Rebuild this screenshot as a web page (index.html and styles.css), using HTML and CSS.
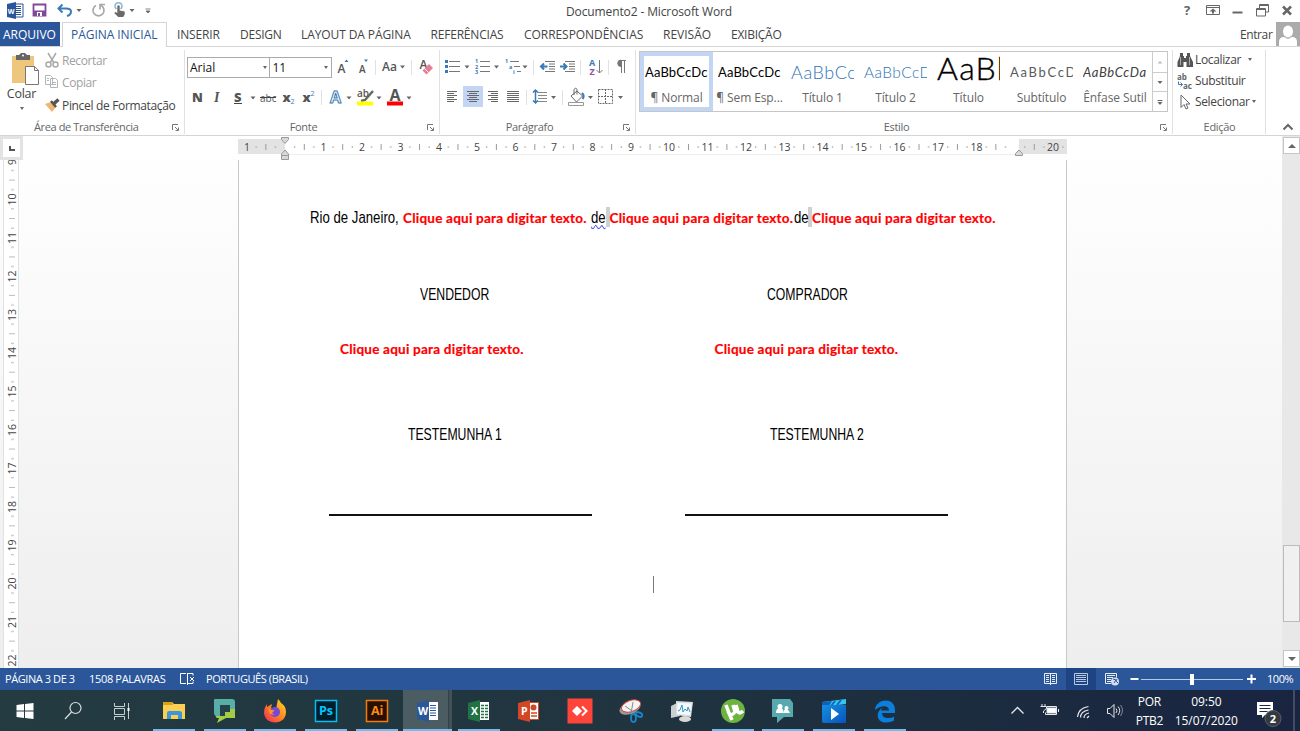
FILE: index.html
```html
<!DOCTYPE html>
<html lang="pt-BR">
<head>
<meta charset="utf-8">
<title>Documento2 - Microsoft Word</title>
<link rel="stylesheet" href="styles.css">
</head>
<body>
<header class="titlebar">
  <div class="quick">
    <svg width="150" height="22" viewBox="0 0 150 22">
      <path d="M15 4h8v13h-8z" fill="#fff" stroke="#2b579a"/><path d="M16 6.500h5M16 8.500h5M16 10.500h5M16 12.500h5M16 14.500h5" stroke="#2b579a"/><path d="M7 4l9-2v17l-9-2z" fill="#2b579a"/><text x="7.700" y="13.500" class="ico-w">W</text>
      <path d="M33.500 4.500h12v11h-12z" fill="#fff" stroke="#80479b" stroke-width="1.800"/><path d="M34 10.500h11v5h-11z" fill="#80479b"/><path d="M37 12h5v4h-5z" fill="#fff"/><path d="M38 13h2v3h-2z" fill="#80479b"/>
      <path d="M59 8.500h7c7 0 6 6 1 7.500M62.500 4.500l-4 4 4 4" fill="none" stroke="#3a7ab8" stroke-width="2"/><path d="M76.500 9h5l-2.500 3zM129.500 9h5l-2.500 3z" fill="#666"/>
      <path d="M96 5.500a5.500 5.500 0 1 0 5 0M100 9.500v-5h5" fill="none" stroke="#a6a6a6" stroke-width="1.600"/>
      <path d="M116.500 9a3.500 3.500 0 1 1 4 0" fill="none" stroke="#8db3d6" stroke-width="1.500"/><path d="M117.300 5.500h2.400v5l5 1v3l-1.500 2.500h-5l-4-4 1.500-1 1.600 1z" fill="#6a6a6a"/>
      <path d="M145.500 9h5M146 11h4l-2 2z" fill="#666" stroke="#666" stroke-width=".8"/>
    </svg>
  </div>
  <div class="window-title">Documento2 - Microsoft Word</div>
  <svg class="window-tools" width="118" height="22" viewBox="0 0 118 22" fill="none" stroke="#666">
    <text x="3" y="15" class="help">?</text>
    <path d="M25.500 5.500h13v9h-13zM25 7.500h14" /><path d="M32 8.500l3.500 3h-2.500v2h-2v-2h-2.500z" fill="#666" stroke="none"/>
    <path d="M51.500 12.500h10" stroke-width="2"/><path d="M75.500 8.500h9v7.500h-9zM75.500 9.500h9M78.500 8v-3.500h9v7.500h-3M78.500 5.500h9"/>
    <path d="M102 6.500l8 8M110 6.500l-8 8" stroke-width="2.500"/>
  </svg>
</header>

<nav class="tabs">
  <span class="tab file">ARQUIVO</span>
  <span class="tab active">PÁGINA INICIAL</span>
  <span class="tab inserir">INSERIR</span>
  <span class="tab design">DESIGN</span>
  <span class="tab layout">LAYOUT DA PÁGINA</span>
  <span class="tab refs">REFERÊNCIAS</span>
  <span class="tab mail">CORRESPONDÊNCIAS</span>
  <span class="tab review">REVISÃO</span>
  <span class="tab view">EXIBIÇÃO</span>
  <span class="sign-in">Entrar</span>
  <svg width="24" height="24" viewBox="0 0 24 24"><path d="M0 0h24v24H0z" fill="#ababab"/><ellipse cx="12" cy="9.500" rx="5" ry="6" fill="#fff"/><path d="M3 24v-4q0-5 5-5l4 2 4-2q5 0 5 5v4z" fill="#fff"/></svg>
</nav>

<section class="ribbon">
  <div class="group clipboard">
    <div class="controls">
      <div class="paste">
        <svg width="30" height="34" viewBox="0 0 30 34"><path d="M2 4h22v27H2z" fill="#eec67c"/><path d="M6 3h3l2-2h4l2 2h3v5H6z" fill="#666"/><circle cx="13" cy="3.500" r="1" fill="#fff"/><path d="M15.500 14.500h9l4 4v14h-13z" fill="#fff" stroke="#777"/><path d="M24.500 14.500v4h4" fill="none" stroke="#777"/></svg>
        <span>Colar</span><i class="caret"></i>
      </div>
      <div class="clip-list">
        <div class="off"><svg width="16" height="16" viewBox="0 0 16 16" fill="none" stroke="#aaa" stroke-width="1.500"><path d="M3 1l6 10M11 1L5 11"/><circle cx="3.500" cy="12.500" r="2.500"/><circle cx="10.500" cy="12.500" r="2.500"/></svg><span>Recortar</span></div>
        <div class="off"><svg width="16" height="16" viewBox="0 0 16 16" fill="#fff" stroke="#b5b5b5"><path d="M.500 1.500h5l2 2v7h-7zM5.500 4.500h5l2 2v7h-7zM7 8.500h4M7 10.500h4M2 4.500h2M2 6.500h2"/></svg><span>Copiar</span></div>
        <div><svg width="16" height="16" viewBox="0 0 16 16"><path d="M0 7l6-2 5 5-4 5z" fill="#efb872"/><path d="M6 4l5 6" stroke="#555" stroke-width="2.500"/><path d="M9 6.500l4.500-4" stroke="#555" stroke-width="3.500"/></svg><span class="painter">Pincel de Formatação</span></div>
      </div>
    </div>
    <div class="caption"><span>Área de Transferência</span><svg class="launch" width="9" height="9" viewBox="0 0 9 9"><path d="M1.500 7V1.500H7M4 4l3 3M7.500 4.500v3h-3" fill="none" stroke="#777"/></svg></div>
  </div>

  <div class="group font">
    <div class="controls rows">
      <div class="tool-row combos">
        <div class="combo family"><span>Arial</span><i class="caret"></i></div><div class="combo size"><span>11</span><i class="caret"></i></div>
        <svg width="104" height="22" viewBox="332 0 104 22">
          <text x="338.500" y="17" class="glyph g12">A</text><path d="M345.500 6h4l-2-2.500zM365 3.500h4l-2 2.500z" fill="#3a7ab8"/><text x="360" y="17" class="glyph g10">A</text>
          <path d="M376.500 4v15M412.500 4v15" stroke="#e1e1e1"/><text x="383" y="15" class="glyph g12">Aa</text><path d="M401 9.500h5l-2.500 3z" fill="#666"/>
          <text x="420.500" y="13" class="glyph g12">A</text><path d="M423.500 14.500l6.500-6.500 4 4-6.500 6.500z" fill="#e57f91"/><path d="M425.500 12.500l4 4" stroke="#fff"/>
        </svg>
      </div>
      <div class="tool-row">
        <svg width="230" height="22" viewBox="187 0 230 22">
          <text x="192" y="15.500" class="glyph bold">N</text><text x="214" y="15.500" class="glyph ital">I</text><text x="234" y="15.500" class="glyph bold">S</text><path d="M234 17.500h8" stroke="#444"/>
          <path d="M250.500 10.500h5l-2.500 3zM346.500 10.500h5l-2.500 3zM376.500 10.500h5l-2.500 3zM406.500 10.500h5l-2.500 3z" fill="#666"/>
          <text x="260" y="15.500" class="glyph abc">abc</text><path d="M260 11.500h16" stroke="#444"/>
          <text x="282.500" y="15.500" class="glyph bold">x</text><text x="290.500" y="18" class="num">2</text><text x="302.500" y="15.500" class="glyph bold">x</text><text x="310.500" y="10" class="num">2</text><path d="M321.500 4v15" stroke="#e1e1e1"/>
          <text x="330" y="16.500" class="outline-a">A</text>
          <text x="357" y="11" class="glyph abc2">ab</text><path d="M373 5l-8 9-4 1" stroke="#666" stroke-width="2.500" fill="none"/><path d="M357 15.500h16v4h-16z" fill="#ff0"/>
          <text x="389.500" y="14.500" class="glyph big-a">A</text><path d="M387 15.500h16v4h-16z" fill="red"/>
        </svg>
      </div>
    </div>
    <div class="caption"><span>Fonte</span><svg class="launch" width="9" height="9" viewBox="0 0 9 9"><path d="M1.500 7V1.500H7M4 4l3 3M7.500 4.500v3h-3" fill="none" stroke="#777"/></svg></div>
  </div>

  <div class="group paragraph">
    <div class="controls rows">
      <div class="tool-row">
        <svg width="190" height="22" viewBox="442 0 190 22" fill="none" stroke="#777">
          <path d="M449 5.500h11M449 10.500h11M449 15.500h11M480 5.500h10M480 10.500h10M480 15.500h10M510 5.500h9M514 10.500h6M517 15.500h4"/>
          <path d="M445 4h3v3h-3zM445 9h3v3h-3zM445 14h3v3h-3z" fill="#3a7ab8" stroke="none"/>
          <text x="475" y="7" class="list-n">1</text><text x="475" y="12.500" class="list-n">2</text><text x="475" y="18" class="list-n">3</text><text x="505" y="7" class="list-n">1</text><text x="509" y="12.500" class="list-n">a</text><text x="513" y="18" class="list-n">i</text>
          <path d="M464.500 9.500h5l-2.500 3zM494 9.500h5l-2.500 3zM522.500 9.500h5l-2.500 3z" fill="#666" stroke="none"/>
          <path d="M533.500 4v15M580.500 4v15M608.500 4v15" stroke="#e1e1e1"/>
          <path d="M545 5.500h10M549 8h6M549 10.500h6M549 13h6M545 15.500h10M565 5.500h10M569 8h6M569 10.500h6M569 13h6M565 15.500h10"/>
          <path d="M547.500 10.500h-6M544 7.500l-3 3 3 3M560 10.500h6M563.500 7.500l3 3-3 3" stroke="#3a7ab8" stroke-width="2"/>
          <text x="589" y="9.500" class="sort-a">A</text><text x="589.500" y="18.500" class="sort-z">Z</text><path d="M599.500 4v13M596.500 14l3 3 3-3"/>
          <path d="M621 4.500h5M621.500 4v13M624.500 4v13"/><path d="M621 4a3 3 0 0 0 0 6.500z" fill="#777"/>
        </svg>
      </div>
      <div class="tool-row">
        <svg width="190" height="22" viewBox="442 0 190 22" fill="none" stroke="#666">
          <path d="M463 0h20v21h-20z" fill="#c2d5f2" stroke="none"/>
          <path d="M447 5.500h10M447 7.500h7M447 9.500h10M447 11.500h7M447 13.500h10M447 15.500h7M467 5.500h12M469 7.500h8M467 9.500h12M469 11.500h8M467 13.500h12M469 15.500h8M488 5.500h10M491 7.500h7M488 9.500h10M491 11.500h7M488 13.500h10M491 15.500h7M507 5.500h12M507 7.500h12M507 9.500h12M507 11.500h12M507 13.500h12M507 15.500h12"/>
          <path d="M526.500 4v15M562.500 4v15" stroke="#e1e1e1"/><path d="M538 6.500h9M538 9.500h9M538 12.500h9M538 15.500h9" stroke="#888"/><path d="M535.500 4v13M533 6.500l2.500-2.500 2.500 2.500M533 14.500l2.500 2.500 2.500-2.500" stroke="#3a7ab8" stroke-width="1.500"/>
          <path d="M551 10h5l-2.500 3zM588 10h5l-2.500 3zM618 10h5l-2.500 3z" fill="#666" stroke="none"/>
          <path d="M571 10l6-5 5.500 5-6 6zM574 9V3.500q2-3 3 0v5"/><path d="M582 7q3 3 .5 6" stroke="#3a7ab8" stroke-width="2"/><path d="M568.500 16.500h15v3h-15z" fill="#fff" stroke="#999"/>
          <path d="M598.500 3.500h14v14h-14zM605.500 3v15M598 10.500h15" stroke-dasharray="2 1"/>
        </svg>
      </div>
    </div>
    <div class="caption"><span>Parágrafo</span><svg class="launch" width="9" height="9" viewBox="0 0 9 9"><path d="M1.500 7V1.500H7M4 4l3 3M7.500 4.500v3h-3" fill="none" stroke="#777"/></svg></div>
  </div>

  <div class="group styles">
    <div class="gallery">
      <div class="style selected"><b class="s-normal">AaBbCcDc</b><span>¶ Normal</span></div>
      <div class="style"><b class="s-normal">AaBbCcDc</b><span>¶ Sem Esp...</span></div>
      <div class="style"><b class="s-h1">AaBbCc</b><span>Título 1</span></div>
      <div class="style"><b class="s-h2">AaBbCcD</b><span>Título 2</span></div>
      <div class="style"><b class="s-title">AaBb</b><span>Título</span></div>
      <div class="style"><b class="s-sub">AaBbCcD</b><span>Subtítulo</span></div>
      <div class="style"><b class="s-emph">AaBbCcDa</b><span>Ênfase Sutil</span></div>
      <svg width="15" height="59" viewBox="0 0 15 59"><path d="M.5 0v59M0 20.500h15M0 39.500h15" stroke="#ccc"/><path d="M5.500 11.500h5L8 9z" fill="#bbb"/><path d="M5.500 29h5L8 32zM5.500 50h5L8 53z" fill="#666"/><path d="M5.500 48.500h5" stroke="#666"/></svg>
    </div>
    <div class="caption"><span>Estilo</span><svg class="launch" width="9" height="9" viewBox="0 0 9 9"><path d="M1.500 7V1.500H7M4 4l3 3M7.500 4.500v3h-3" fill="none" stroke="#777"/></svg></div>
  </div>

  <div class="group editing">
    <div class="edit-list">
      <div><svg width="16" height="16" viewBox="0 0 16 16"><path d="M3 1h3v3h1v2h2V4h1V1h3v3l3 6v5H9.500v-5h-3v5H.500v-5L3 4z" fill="#555"/><path d="M3.500 5v8M12.500 5v8" stroke="#aaa"/></svg><span class="loc">Localizar</span><i class="caret"></i></div>
      <div><svg width="16" height="16" viewBox="0 0 16 16"><text x="0" y="6.500" class="rep">ab</text><text x="6" y="15.500" class="rep">ac</text><path d="M1.500 8.500v3h4M3.500 9.500l2 2-2 2" fill="none" stroke="#3a7ab8"/></svg><span class="sub">Substituir</span></div>
      <div><svg width="16" height="16" viewBox="0 0 16 16"><path d="M4 1v12.500l3-3 2 4.500 2-1-2-4h4z" fill="#fff" stroke="#666"/></svg><span class="sel">Selecionar</span><i class="caret"></i></div>
    </div>
    <div class="caption"><span>Edição</span></div>
  </div>
  <svg class="collapse" width="34" height="88" viewBox="0 0 34 88"><path d="M17.500 82.500l4.500-4.500 4.500 4.500" fill="none" stroke="#666" stroke-width="2"/></svg>
</section>

<main class="workspace">
  <aside class="vruler">
    <div class="tab-stop"><span></span></div>
    <svg width="22" height="508" viewBox="0 160 22 508">
      <defs><pattern id="vt" width="22" height="38.420" patternUnits="userSpaceOnUse" y="199.300"><path d="M11 9.600h3M11 28.800h3" stroke="#b5b5b5"/><path d="M9 19.200h6" stroke="#bbb"/></pattern></defs>
      <path d="M3 160h16v508H3z" fill="#fff"/><path d="M3.500 160v508M18.500 160v508" stroke="#e1e1e1"/><path d="M4 160h14v508H4z" fill="url(#vt)"/>
      <g class="vnums">
        <text transform="translate(15.500 162)rotate(-90)">9</text><text transform="translate(15.500 199.500)rotate(-90)">10</text><text transform="translate(15.500 238)rotate(-90)">11</text><text transform="translate(15.500 276.500)rotate(-90)">12</text><text transform="translate(15.500 315)rotate(-90)">13</text><text transform="translate(15.500 353)rotate(-90)">14</text><text transform="translate(15.500 391.500)rotate(-90)">15</text><text transform="translate(15.500 430)rotate(-90)">16</text><text transform="translate(15.500 468.500)rotate(-90)">17</text><text transform="translate(15.500 507)rotate(-90)">18</text><text transform="translate(15.500 545.500)rotate(-90)">19</text><text transform="translate(15.500 583.500)rotate(-90)">20</text><text transform="translate(15.500 622)rotate(-90)">21</text><text transform="translate(15.500 660.500)rotate(-90)">22</text>
      </g>
    </svg>
  </aside>
  <div class="canvas">
    <svg class="hruler" width="829" height="24" viewBox="238 136 829 24">
      <defs><pattern id="ht" width="38.420" height="24" patternUnits="userSpaceOnUse" x="323.500" y="136"><path d="M9.600 10v2M28.800 10v2" stroke="#aaa"/><path d="M19.200 8v6" stroke="#999"/></pattern></defs>
      <path d="M237 139h830v15H237z" fill="#fff"/><path d="M237 139h48v15h-48zM1019 139h48v15h-48z" fill="#e3e3e3"/><path d="M285 154.500h734" stroke="#eee"/>
      <path d="M238 136h829v24H238z" fill="url(#ht)"/>
      <g class="hnums"><text x="247" y="151">1</text><text x="323.500" y="151">1</text><text x="362" y="151">2</text><text x="400.500" y="151">3</text><text x="439" y="151">4</text><text x="477" y="151">5</text><text x="515.500" y="151">6</text><text x="554" y="151">7</text><text x="592.500" y="151">8</text><text x="631" y="151">9</text><text x="669" y="151">10</text><text x="707.500" y="151">11</text><text x="746" y="151">12</text><text x="784.500" y="151">13</text><text x="822.500" y="151">14</text><text x="861" y="151">15</text><text x="899.500" y="151">16</text><text x="938" y="151">17</text><text x="976.500" y="151">18</text><text x="1053" y="151">20</text></g>
      <path d="M281.500 137.500h7v2l-3.500 4-3.500-4zM281.500 159.500v-5.500l3.500-4 3.500 4v5.500zM281.500 155.500h7M1015.500 155.500v-2l3.500-3.500 3.500 3.500v2z" fill="#d8d8d8" stroke="#999"/>
    </svg>
    <article class="page">
      <div class="line date-line">
        <span class="plain rio">Rio de Janeiro,</span><span class="field f1">Clique aqui para digitar texto.</span><span class="plain de spell">de</span><i class="mark"></i><span class="field f2">Clique aqui para digitar texto.</span><span class="plain de">de</span><i class="mark"></i><span class="field">Clique aqui para digitar texto.</span>
      </div>
      <div class="line parties"><span class="plain caps">VENDEDOR</span><span class="plain caps">COMPRADOR</span></div>
      <div class="line fields"><span class="field">Clique aqui para digitar texto.</span><span class="field">Clique aqui para digitar texto.</span></div>
      <div class="line witnesses"><span class="plain caps">TESTEMUNHA 1</span><span class="plain caps">TESTEMUNHA 2</span></div>
      <div class="signatures"><hr><hr></div>
      <div class="cursor"></div>
    </article>
  </div>
  <aside class="scrollbar">
    <div class="arrow"><svg width="16" height="16" viewBox="0 0 16 16"><path d="M4 10h8L8 6z" fill="#666"/></svg></div>
    <div class="thumb"></div>
    <div class="arrow down"><svg width="16" height="16" viewBox="0 0 16 16"><path d="M4 6h8l-4 4z" fill="#666"/></svg></div>
  </aside>
</main>

<footer class="status">
  <span class="st-page">PÁGINA 3 DE 3</span><span class="st-words">1508 PALAVRAS</span>
  <svg width="15" height="14" viewBox="0 0 15 14" fill="none" stroke="#fff"><path d="M6 1.500H.500v10H6M7.500 1v12M8 1.500h5v2M8 11.500h5v-2M10 5l4 4M14 5l-4 4"/></svg>
  <span class="st-lang">PORTUGUÊS (BRASIL)</span>
  <svg class="views" width="232" height="22" viewBox="1034 0 232 22" fill="none" stroke="#e6ecf5">
    <path d="M1044.500 5.500h12v10h-12zM1050.500 5v12M1046 7.500h3M1046 9.500h3M1046 11.500h3M1046 13.500h3M1052 7.500h3M1052 9.500h3M1052 11.500h3M1052 13.500h3"/>
    <path d="M1066 0h30v22h-30z" fill="#1e4483" stroke="none"/><path d="M1074.500 5.500h13v11h-13zM1076 7.500h10M1076 9.500h10M1076 11.500h10M1076 13.500h10" stroke="#b8c8e0"/>
    <path d="M1111 15.500h-5.500v-10h11v4M1107 7.500h8M1107 9.500h6M1107 11.500h4M1107 13.500h4"/><circle cx="1115" cy="13.500" r="4" fill="#d5dfef" stroke="none"/><path d="M1113 11l3 1-2 3M1117 11l-1 2 2 2" stroke="#2b579a"/>
    <path d="M1130.500 11h8M1247 11h9M1251.500 6.500v9" stroke="#fff" stroke-width="2"/><path d="M1141 11.500h102" stroke="#b8c8e0"/><path d="M1190 6h4v11h-4z" fill="#fff" stroke="none"/>
  </svg>
  <span class="st-zoom">100%</span>
</footer>

<footer class="taskbar">
  <div class="sys"><svg width="24" height="24" viewBox="0 0 24 24"><path d="M3.500 6l7.500-1v6.500H3.500zM12 5l8.500-1v7.500H12zM3.500 12.500H11V19l-7.500-1zM12 12.500h8.500V20L12 19z" fill="#fff"/></svg></div>
  <div class="sys"><svg width="24" height="24" viewBox="0 0 24 24" fill="none" stroke="#ddd" stroke-width="1.200"><circle cx="13.500" cy="9" r="5.500"/><path d="M9.500 13L3 20"/></svg></div>
  <div class="sys"><svg width="24" height="24" viewBox="0 0 24 24" fill="none" stroke="#c8cdd0"><path d="M3.500 4v3.500h10V4M3.500 9.500h10v6h-10zM3.500 21v-3.500h10V21M17.500 4v16"/><path d="M16.500 9h2v3h-2z" fill="#fff" stroke="none"/></svg></div>
  <div class="app open gap"><svg width="24" height="24" viewBox="0 0 24 24"><path d="M1 3h9l2 2h11v15H1z" fill="#fbcf53"/><path d="M1 3h9l1 3H1z" fill="#dca017"/><path d="M5 20v-6q0-2 2-2h10q3 0 3 2v6h-4v-4H9v4z" fill="#3a97d9"/></svg></div>
  <div class="app open"><svg width="24" height="24" viewBox="0 0 24 24"><path d="M1 1q0-1 1-1h17q3 0 3 3v7l-5 4V6H7v10h4v3H6q-5-2-5-5z" fill="#59aea7"/><path d="M7 6h10v8h-4v3H7z" fill="#26424a"/><path d="M22 10v9h-9l-9 5 2-5q-4 0-3-2h9v-4h5v-3z" fill="#a3cd45"/></svg></div>
  <div class="app open"><svg width="24" height="24" viewBox="0 0 24 24"><defs><linearGradient id="fx" x1="1" x2="0" y2="1"><stop stop-color="#ffe226"/><stop offset=".5" stop-color="#ff8420"/><stop offset="1" stop-color="#f22265"/></linearGradient></defs><path d="M15 0q2 2 3 4 5 3 5 9c0 14-22 14-22 0q0-4 3-8v3l5-3-1 4 5 1z" fill="url(#fx)"/><circle cx="12" cy="13" r="5" fill="#7548d7"/><path d="M5 9q3 3 7 2l-3 3 3 2-5-1z" fill="#ff9524"/></svg></div>
  <div class="app open"><svg width="24" height="24" viewBox="0 0 24 24"><path d="M1.500 1.500h21v21h-21z" fill="#001d2b" stroke="#00bff3" stroke-width="1.500"/><text x="5" y="16" class="adobe ps">Ps</text></svg></div>
  <div class="app open"><svg width="24" height="24" viewBox="0 0 24 24"><path d="M1.500 1.500h21v21h-21z" fill="#281100" stroke="#f57c00" stroke-width="1.500"/><text x="6" y="16" class="adobe ai">Ai</text></svg></div>
  <div class="app open current"><svg width="24" height="24" viewBox="0 0 24 24"><path d="M12 3h10v18H12z" fill="#fff"/><path d="M14 6.500h6M14 9h6M14 11.500h6M14 14h6M14 16.500h6" stroke="#2b579a"/><path d="M1 4l12-3v22L1 20z" fill="#2b579a"/><text x="2" y="16" class="office">W</text></svg></div>
  <div class="app open"><svg width="24" height="24" viewBox="0 0 24 24"><path d="M12 3h10v18H12z" fill="#fff"/><path d="M14 6.500h3M18 6.500h3M14 9.500h3M18 9.500h3M14 12.500h3M18 12.500h3M14 15.500h3M18 15.500h3M14 18.500h3M18 18.500h3" stroke="#217346" stroke-width="1.600"/><path d="M1 4l12-3v22L1 20z" fill="#217346"/><text x="4" y="16" class="office">X</text></svg></div>
  <div class="app"><svg width="24" height="24" viewBox="0 0 24 24"><path d="M12 3.500h9.500v17H12z" fill="#fff" stroke="#d24726"/><circle cx="16.500" cy="8.500" r="3" fill="#d24726"/><path d="M14 14h6M14 17h6" stroke="#d24726" stroke-width="1.500"/><path d="M1 4l12-3v22L1 20z" fill="#d24726"/><text x="4" y="16" class="office">P</text></svg></div>
  <div class="app"><svg width="26" height="26" viewBox="0 0 26 26"><path d="M.500.500h25v25H.500z" fill="#ff443a"/><path d="M10 8l5 5-5 5-5-5z" fill="#fff"/><path d="M15 8.500l4.500 4.500-4.500 4.500" fill="none" stroke="#fff" stroke-width="2"/></svg></div>
  <div class="app"><svg width="24" height="24" viewBox="0 0 24 24"><ellipse cx="11" cy="9" rx="11" ry="6" fill="#999" transform="rotate(-20 11 9)"/><ellipse cx="12" cy="7" rx="10" ry="5.500" fill="#f4f4f4" stroke="#d54545" transform="rotate(-20 12 7)"/><path d="M14 3l-2 12M6 7l10 7" stroke="#888"/><g fill="none" stroke="#1b86c9" stroke-width="1.800"><ellipse cx="14.500" cy="19" rx="2.500" ry="4"/><ellipse cx="20" cy="15.500" rx="3.500" ry="2" transform="rotate(25 20 15.500)"/></g></svg></div>
  <div class="app"><svg width="24" height="24" viewBox="0 0 24 24"><path d="M1 7l6-3 3 13-9 2z" fill="#c9cfd0"/><ellipse cx="15" cy="20" rx="6" ry="3" fill="#d8d8d8"/><path d="M6 2l17 1-2 15-15-2z" fill="#ddd"/><path d="M7.500 4l14 .500-1.500 11.500-13-1z" fill="#f2faff"/><path d="M8 12l2-1 2-5 1 7 2-3 2 2 1-4 2 5" stroke="#3993c4" fill="none"/></svg></div>
  <div class="app open"><svg width="26" height="26" viewBox="0 0 26 26"><circle cx="13" cy="13" r="12" fill="#6db33f"/><path d="M6 7l3 8q2 4 6-1l-2-7M16 7l2 7q2 2 5-1M8 13l4 9" fill="none" stroke="#fff" stroke-width="3.500"/></svg></div>
  <div class="app open"><svg width="24" height="24" viewBox="0 0 24 24"><path d="M1 0h18l3 4v14h-9l-7 6v-6H1z" fill="#57a9ad"/><path d="M5 14q0-5 4-5t3 5q1-4 3-4t4 4z" fill="#fff"/><circle cx="9" cy="7.500" r="2.500" fill="#fff"/><circle cx="15.500" cy="9" r="2" fill="#fff"/></svg></div>
  <div class="app open"><svg width="26" height="26" viewBox="0 0 26 26"><defs><linearGradient id="mv" x2="1" y2="1"><stop stop-color="#168fe0"/><stop offset="1" stop-color="#0754bd"/></linearGradient></defs><path d="M1 4l24-3v5L1 9z" fill="#36c5ef"/><path d="M1 4l10-1-3 5-7 1z" fill="#1062b8"/><path d="M14 3l-4 5M20 2l-4 5" stroke="#1267ba" stroke-width="2"/><path d="M1 7h24v18H3q-2 0-2-2z" fill="url(#mv)"/><path d="M10 10l8 6-8 6z" fill="#fff"/></svg></div>
  <div class="app open"><svg width="24" height="24" viewBox="0 0 24 24"><path d="M2 10C4-1 22-2 22 11v3H9q0 5 6 5 4 0 6-1.500v4q-3 2-8 2c-10 0-11-11-3-15-2 2-2 3-2 3h8c0-6-9-5-14-.5z" fill="#0a80dc"/></svg></div>
  <svg class="tray" width="120" height="41" viewBox="1005 690 120 41" fill="none" stroke="#e6e8ec">
    <path d="M1012.500 713.500l6-6 6 6" stroke-width="1.300"/><path d="M1048 708h9v5h-9z" fill="#fff"/><path d="M1048 706.500h9.500v8h-11v-2M1059.500 709v3M1043 704v3M1046 704v3M1041.500 706.500h6v2l-3 2.500v2"/>
    <path d="M1078.500 717q1-9 11-10.500M1081.500 717.500q0-6 8-7.500M1085 718q0-4 5-5M1088 718l2-2" stroke-width="1.200"/><path d="M1108.500 708.500h2.500l4-4v13l-4-4h-2.500zM1117 708.500q2 2 0 4.500M1119 706.500q3.500 4 0 8.500" /><path d="M1121.500 705q4 5 0 11" opacity=".5"/>
  </svg>
  <div class="lang"><span>POR</span><span>PTB2</span></div>
  <div class="clock"><span>09:50</span><span>15/07/2020</span></div>
  <svg class="notify" width="46" height="41" viewBox="1250 690 46 41"><path d="M1258 702h16v13h-8l-3 3v-3h-5z" fill="#fff"/><path d="M1260.500 705.500h11M1260.500 708.500h11M1260.500 711.500h8" stroke="#1a2944"/><circle cx="1274" cy="718.500" r="8" fill="#34383f" stroke="#5b5f66"/><text x="1274" y="722.500" class="count">2</text><path d="M1295 690v41" stroke="#6d7484"/></svg>
</footer>
</body>
</html>
```

FILE: styles.css
```css
* { box-sizing: border-box; }
body { margin: 0; width: 1300px; height: 731px; overflow: hidden; display: flex; flex-direction: column; background: #fff; font: 12px "Open Sans", "Noto Sans", sans-serif; color: #444; white-space: nowrap; }
svg { display: block; flex: none; }
svg text { stroke: none; }

.titlebar { height: 22px; display: flex; flex: none; }
.quick { width: 566px; }
.quick svg { overflow: visible; }
.window-title { width: 615px; line-height: 23px; font-size: 12px; letter-spacing: -.12px; }
.ico-w { font: bold 7px "Open Sans", sans-serif; fill: #fff; }
.help { font: bold 13px "Open Sans", sans-serif; fill: #666; }

.tabs { height: 25px; flex: none; display: flex; border-bottom: 1px solid #d5d5d5; line-height: 25px; letter-spacing: -.25px; }
.tab { flex: none; }
.file { width: 60px; height: 24px; background: #2b579a; color: #fff; padding-left: 3px; letter-spacing: 0; }
.active { width: 105px; height: 25px; margin-left: 2px; padding-left: 8px; color: #2b579a; background: #fff; border: 1px solid #d5d5d5; border-width: 1px 1px 0; line-height: 23px; letter-spacing: -.05px; }
.inserir { width: 63px; margin-left: 10px; letter-spacing: -.15px; }
.design { width: 61px; }
.layout { width: 129.500px; letter-spacing: -.1px; }
.refs { width: 93.500px; letter-spacing: -.2px; }
.mail { width: 139px; letter-spacing: -.05px; }
.review { width: 68px; letter-spacing: 0; }
.view { width: 509px; }
.sign-in { width: 36px; letter-spacing: -.4px; }

.ribbon { height: 89px; flex: none; display: flex; border-bottom: 1px solid #d5d5d5; }
.group { display: flex; flex-direction: column; justify-content: space-between; height: 84px; margin-top: 3px; padding-top: 1px; border-right: 1px solid #e1e1e1; }
.caption { height: 16px; display: flex; align-items: center; font-size: 11px; line-height: 18px; letter-spacing: -.3px; color: #666; }
.caption span { flex: 1; text-align: center; padding-top: 2px; }
.launch { margin-top: 2px; }
.caret { flex: none; width: 0; height: 0; border: 2.500px solid transparent; border-top: 3px solid #666; border-bottom: 0; }
.controls { display: flex; }
.rows { flex-direction: column; gap: 8px; padding-top: 5px; }
.tool-row { display: flex; height: 22px; align-items: center; }

.clipboard { width: 185px; }
.clipboard .caption { padding-right: 4px; }
.clipboard .caption span { text-align: left; padding-left: 34px; letter-spacing: -.38px; }
.paste { width: 43px; display: flex; flex-direction: column; align-items: center; }
.paste svg { margin-left: 7px; margin-top: 1px; }
.paste .caret { margin-top: 5px; }
.paste span { font-size: 12.500px; line-height: 16px; letter-spacing: -.25px; }
.clip-list { padding: 0 0 0 2px; margin-top: -2px; }
.clip-list div { display: flex; align-items: center; height: 22px; gap: 1px; letter-spacing: -.4px; }
.clip-list div:last-child { height: 24px; }
.off { color: #a0a0a0; }
.clip-list .painter { letter-spacing: -.33px; }

.font { width: 255px; padding-left: 2px; padding-right: 4px; }
.font .caption span { padding-right: 6px; }
.combo { height: 21px; border: 1px solid #ababab; display: flex; align-items: center; justify-content: space-between; padding: 0 2px; color: #111; }
.family { width: 84px; }
.size { width: 62px; border-left: 0; padding-right: 3px; }
.combos svg { margin-left: -1px; }
.glyph { font-family: "Open Sans", sans-serif; font-weight: 600; fill: #555; }
.g12 { font-size: 12px; }
.g10 { font-size: 10px; }
.bold { font-size: 13px; font-weight: 800; }
.ital { font: italic bold 14px "Liberation Serif", serif; }
.abc { font-size: 10px; font-weight: 400; }
.abc2 { font-size: 10px; }
.num { font: 7px "Open Sans", sans-serif; fill: #3a7ab8; }
.outline-a { font: bold 16px "Open Sans", sans-serif; fill: #fff; }
svg .outline-a { stroke: #3a7ab8; stroke-width: 1px; }
.big-a { font-size: 16px; font-weight: bold; }
.list-n { font: bold 5.500px "Open Sans", sans-serif; fill: #3a7ab8; }
.sort-a, .sort-z { font: bold 9px "Open Sans", sans-serif; fill: #3a7ab8; }
.sort-z { fill: #8d55a5; }
.paragraph { width: 196px; padding-left: 2px; padding-right: 4px; }
.paragraph .caption span { padding-right: 5px; }

.styles { width: 537px; padding-left: 3px; padding-right: 4px; }
.styles .caption span { padding-right: 5px; }
.gallery { width: 529px; height: 61px; border: 1px solid #c6c6c6; display: flex; }
.style { width: 73px; height: 59px; padding: 4px; text-align: center; flex: none; overflow: hidden; }
.style:nth-child(7) { width: 74px; }
.selected { border: 4px solid #c2d5f2; padding: 0; }
.style b { display: block; width: 63px; height: 32px; margin-left: 1px; overflow: hidden; font-weight: 400; line-height: 33px; text-align: left; }
.style span { display: block; line-height: 20px; color: #666; letter-spacing: -.1px; margin: 0 -4px; }
.style .s-normal { font-family: Lato, sans-serif; font-size: 13px; color: #000; letter-spacing: .15px; }
.style .s-h1, .style .s-h2 { font-family: Lato, sans-serif; font-weight: 300; color: #2e74b5; font-size: 18px; letter-spacing: .6px; }
.style .s-h2 { font-size: 15.500px; letter-spacing: .4px; }
.style .s-title { font-family: Lato, sans-serif; font-weight: 300; color: #000; font-size: 32px; line-height: 24px; letter-spacing: 1.200px; -webkit-text-stroke: .4px #000; }
.s-sub { font-family: Lato, sans-serif; font-size: 13px; letter-spacing: 1.700px; color: #5a5a5a; }
.s-emph { font-family: Lato, sans-serif; font-size: 13px; font-style: italic; color: #404040; letter-spacing: .65px; }

.editing { width: 93px; padding-left: 4px; }
.edit-list div { display: flex; align-items: center; height: 21px; gap: 2px; }
.edit-list span { letter-spacing: -.35px; }
.edit-list .caret { margin-left: 5px; }
.edit-list .sel + .caret { margin-left: 0; }
.edit-list { margin-top: -2px; }
.editing .caption span { padding-right: 3px; }
.rep { font: bold 8px "Open Sans", sans-serif; fill: #666; }

.workspace { height: 532px; flex: none; display: flex; background: linear-gradient(#fff, #eee); }
.vruler { width: 23px; display: flex; flex-direction: column; }
.tab-stop { width: 23px; height: 24px; flex: none; background: #fff; border: 3px solid #e3e3e3; padding: 7px 0 0 6px; }
.tab-stop span { display: block; width: 6px; height: 5px; border: 2px solid #555; border-width: 0 0 2px 2px; }
.vnums, .hnums { font: 10.500px "Open Sans", sans-serif; text-anchor: middle; fill: #444; }
.canvas { width: 1259px; padding-left: 215px; }
.page { width: 829px; height: 508px; background: #fff; border: 1px solid #c8c8c8; border-width: 0 1px; padding-top: 46px; }
.line { display: flex; height: 24px; line-height: 24px; }
.plain { font: 15px "Liberation Sans", Arial, sans-serif; line-height: 24px; color: #000; transform: scale(.88, 1.06); transform-origin: left; flex: none; }
.caps { transform: scale(.815, 1.06); }
.field { font: 700 13.500px Lato, Carlito, sans-serif; line-height: 24px; color: red; flex: none; letter-spacing: .23px; -webkit-text-stroke: .2px red; }
.date-line { padding-left: 71px; }
.rio { width: 93px; }
.f1 { width: 187.500px; }
.f2 { width: 184px; }
.de { width: 15px; }
.spell { text-decoration: underline wavy #5560e0 1px; text-underline-offset: 1px; }
.mark { width: 4px; height: 20px; margin-top: 1px; background: #d0d0d0; }
.date-line .f2 ~ .mark { margin-left: -.500px; }
.parties { margin-top: 53px; padding-left: 181px; }
.parties span { width: 347px; }
.fields { margin-top: 30px; padding-left: 101px; }
.fields span { width: 374.500px; }
.witnesses { margin-top: 62px; padding-left: 168.500px; }
.witnesses span { width: 362px; }
.signatures { display: flex; gap: 93px; padding-left: 90px; margin-top: 67px; }
.signatures hr { width: 263px; height: 2px; border: 0; background: #111; margin: 0; }
.cursor { width: 1px; height: 17px; background: #777; margin: 60px 0 0 414px; }

.scrollbar { width: 18px; background: #e8e8e8; display: flex; flex-direction: column; align-items: center; padding-top: 1px; }
.arrow { width: 17px; height: 17px; border: 1px solid #c6c6c6; background: #fff; flex: none; }
.thumb { width: 17px; height: 77px; margin-top: 391px; border: 1px solid #bbb; background: #f0f0f0; }
.down { margin-top: 28px; }

.status { height: 22px; flex: none; display: flex; align-items: center; background: #2b579a; color: #fff; font-size: 11px; letter-spacing: -.42px; padding-left: 5px; }
.status span { line-height: 14px; padding-bottom: 1px; }
.st-page { width: 84px; }
.st-words { width: 91px; letter-spacing: -.33px; }
.st-lang { margin-left: 11px; width: 828px; }
.st-zoom { margin-left: 1px; }

.taskbar { height: 41px; flex: none; display: flex; background: linear-gradient(90deg, #243b42, #20353f 45%, #1c2c3f 75%, #192441); }
.sys { width: 49px; display: flex; align-items: center; justify-content: center; }
.app { width: 50.800px; display: flex; align-items: center; justify-content: center; flex: none; }
.gap { margin-left: 1.400px; }
.open { background: linear-gradient(#76b9ed, #76b9ed) 50% 100% / 42px 2px no-repeat; }
.current { background: linear-gradient(#76b9ed, #76b9ed) 50% 100% / 49px 2px no-repeat, linear-gradient(90deg, transparent 1px, #4b5c63 1px 46px, #324248 46px 47px, #425158 47px 50px, transparent 50px); }
.tray { margin-left: 94px; }
.adobe { font: bold 12.500px "Open Sans", sans-serif; }
.ps { fill: #00c8ff; }
.ai { fill: #ff8a18; }
.office { font: bold 10.500px "Open Sans", sans-serif; fill: #fff; }
.lang, .clock { display: flex; flex-direction: column; align-items: center; line-height: 19px; padding-top: 2px; color: #fff; letter-spacing: -.05px; }
.lang { width: 50px; letter-spacing: -.3px; }
.clock { width: 64px; }
.notify { margin-left: 11px; }
.count { font: bold 11px "Open Sans", sans-serif; fill: #fff; text-anchor: middle; }
```
